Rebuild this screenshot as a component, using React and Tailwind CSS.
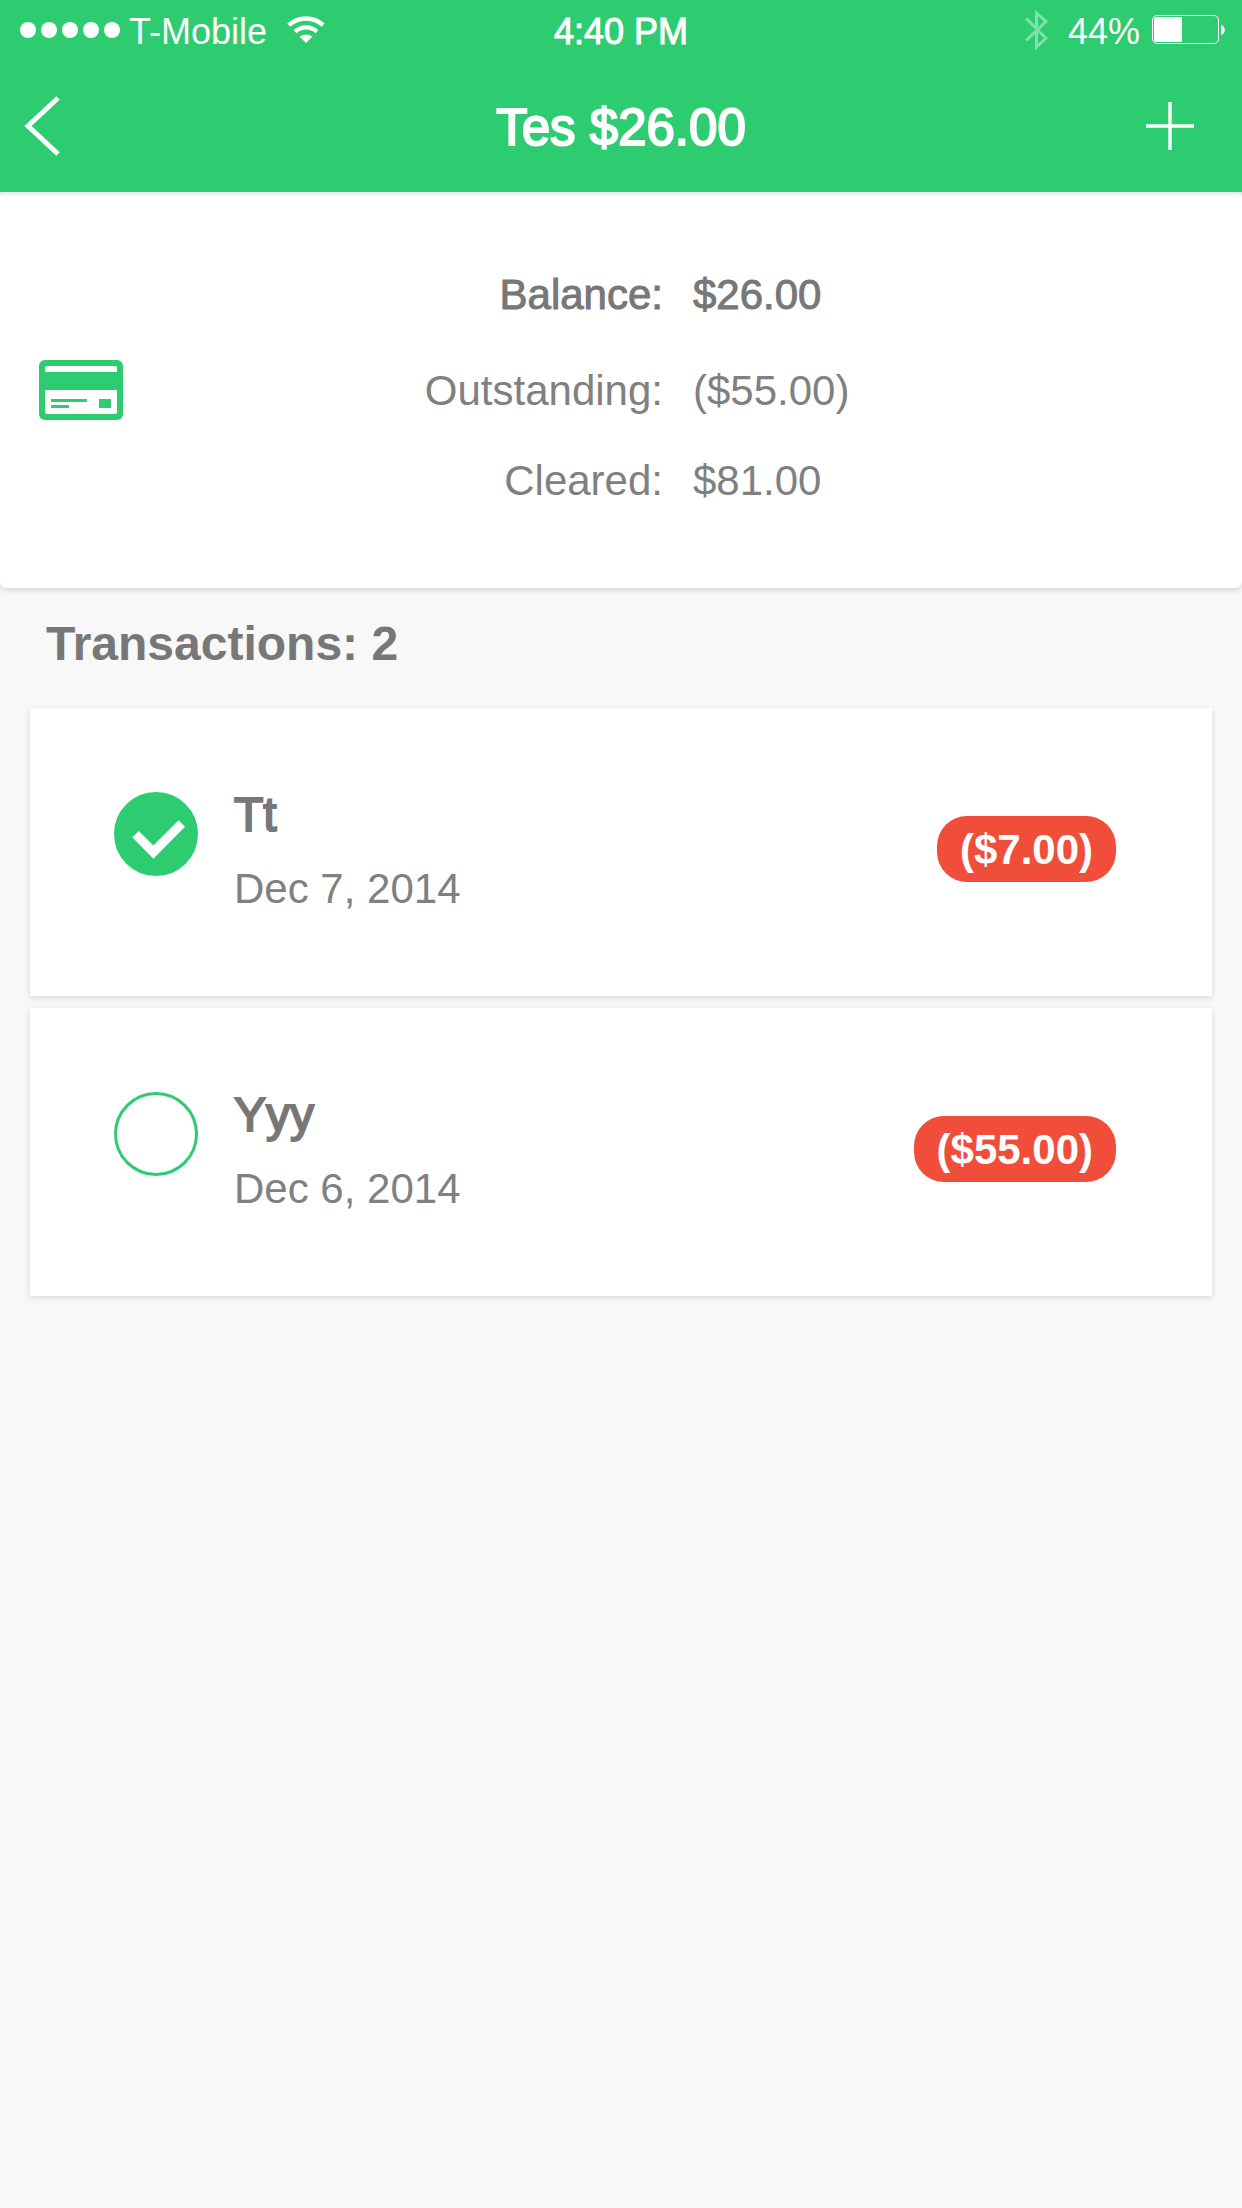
import React, { useState } from "react";

const transactions = [
  { id: "tt", name: "Tt", date: "Dec 7, 2014", amount: "($7.00)", cleared: true },
  { id: "yyy", name: "Yyy", date: "Dec 6, 2014", amount: "($55.00)", cleared: false },
];

function Wifi() {
  return (
    <svg className="ml-5 h-[28px] w-[38px]" viewBox="0 0 38 28" fill="none" aria-hidden="true">
      <path d="M1.8 9.2a25.5 25.5 0 0 1 34.4 0" stroke="#fff" strokeWidth="4.4" />
      <path d="M8 15.6a16.6 16.6 0 0 1 22 0" stroke="#fff" strokeWidth="4.2" />
      <path d="M19 27l-6.3-6.3a10 10 0 0 1 12.6 0z" fill="#fff" />
    </svg>
  );
}

function Bluetooth() {
  return (
    <svg className="h-[42px] w-[24px] opacity-40" viewBox="0 0 24 42" fill="none" aria-hidden="true">
      <path d="M1.2 9.5L21 29.3 11.5 38V4L21 12.5 1.2 31.5" stroke="#fff" strokeWidth="3" />
    </svg>
  );
}

function Battery() {
  return (
    <svg className="ml-3 h-[30px] w-[74px]" viewBox="0 0 74 30" aria-hidden="true">
      <rect x="0.5" y="0.5" width="66" height="28" rx="4.5" fill="none" stroke="#fff" />
      <path d="M4 2h26v25H4a2 2 0 0 1-2-2V4a2 2 0 0 1 2-2z" fill="#fff" />
      <path d="M69 10c5 0.8 5 9.2 0 10z" fill="#fff" />
    </svg>
  );
}

function StatusBar() {
  return (
    <div className="grid h-[60px] grid-cols-[1fr_auto_1fr] items-center px-4 text-[36px] leading-[60px]">
      <div className="flex items-center pl-1">
        <svg className="mr-[9px] h-4 w-[100px]" viewBox="0 0 100 16" fill="#fff" aria-hidden="true">
          <circle cx="8" cy="8" r="8" />
          <circle cx="29" cy="8" r="8" />
          <circle cx="50" cy="8" r="8" />
          <circle cx="71" cy="8" r="8" />
          <circle cx="92" cy="8" r="8" />
        </svg>
        <span className="h-[60px] pt-[2px]">T-Mobile</span>
        <Wifi />
      </div>
      <time className="h-[60px] pt-[2px] [-webkit-text-stroke:1px_currentColor]">4:40 PM</time>
      <div className="flex items-center justify-end">
        <Bluetooth />
        <span className="ml-[19px] h-[60px] pt-[2px]">44%</span>
        <Battery />
      </div>
    </div>
  );
}

function Summary() {
  return (
    <section className="flex items-center rounded-[6px] bg-white pl-[39px] pr-[9px] shadow-[0_2px_6px_rgba(0,0,0,0.15)]">
      <svg className="h-[60px] w-[84px] shrink-0" viewBox="0 0 84 60" aria-hidden="true">
        <rect width="84" height="60" rx="6" fill="#2ecc71" />
        <path d="M6 12V8a2 2 0 0 1 2-2h68a2 2 0 0 1 2 2v4z" fill="#fff" />
        <path d="M6 30h72v22a2 2 0 0 1-2 2H8a2 2 0 0 1-2-2z" fill="#fff" />
        <path d="M12 39h36v3H12zM12 45h18v3H12zM60 39h12v9H60z" fill="#2ecc71" />
      </svg>
      <dl className="grid flex-1 grid-cols-2 grid-rows-[102px_90px_90px] items-center gap-x-[30px] pb-[62px] pt-[52px] text-[42px] leading-[48px] text-[#808080]">
        <dt className="text-right text-[#777] [-webkit-text-stroke:1px_currentColor]">Balance:</dt>
        <dd className="text-[#777] [-webkit-text-stroke:1px_currentColor]">$26.00</dd>
        <dt className="text-right">Outstanding:</dt>
        <dd>($55.00)</dd>
        <dt className="text-right">Cleared:</dt>
        <dd>$81.00</dd>
      </dl>
    </section>
  );
}

function Transaction({ item }) {
  const [cleared, setCleared] = useState(item.cleared);
  return (
    <li className="flex items-start bg-white pb-[77px] pl-[84px] pr-[96px] pt-[77px] shadow-[0_2px_6px_rgba(0,0,0,0.13)]">
      <label className="relative mt-[7px] block size-[84px] shrink-0" htmlFor={item.id}>
        <input
          id={item.id}
          type="checkbox"
          aria-label={`${item.name} cleared`}
          checked={cleared}
          onChange={(e) => setCleared(e.target.checked)}
          className="block size-[84px] appearance-none rounded-full border-[3px] border-[#2ecc71] bg-white checked:bg-[#2ecc71]"
        />
        {cleared && (
          <svg className="pointer-events-none absolute inset-0" viewBox="0 0 84 84" aria-hidden="true">
            <path d="M18.3 45.3l6.4-6.3 14.6 14.5 25.4-25.2 6.3 6.4-31.7 32z" fill="#fff" />
          </svg>
        )}
      </label>
      <div className="ml-9 flex-1">
        <h3 className="mb-[14px] text-[48px] leading-[60px] text-[#777] [-webkit-text-stroke:2px_currentColor]">
          {item.name}
        </h3>
        <p className="text-[42px] leading-[60px] text-[#808080]">{item.date}</p>
      </div>
      <span className="mt-[31px] rounded-[30px] bg-[#f04e3a] px-[23px] pt-[2px] text-[42px] font-bold leading-[64px] text-white">
        {item.amount}
      </span>
    </li>
  );
}

export default function App() {
  return (
    <div className="min-h-screen bg-[#f8f8f8] font-['Liberation_Sans',Arial,sans-serif]">
      <header className="relative bg-[#2ecc71] text-white shadow-[0_2px_6px_rgba(0,0,0,0.12)]">
        <StatusBar />
        <nav className="grid h-[132px] grid-cols-[1fr_auto_1fr] items-center px-6">
          <button type="button" aria-label="Back" className="justify-self-start">
            <svg className="h-[60px] w-9" viewBox="0 0 36 60" fill="none">
              <path d="M34 2L4 30l30 28" stroke="#fff" strokeWidth="5" />
            </svg>
          </button>
          <h1 className="pt-[3px] text-[51px] leading-[60px] [-webkit-text-stroke:2px_currentColor]">Tes $26.00</h1>
          <button type="button" aria-label="Add transaction" className="justify-self-end pr-6">
            <svg className="size-12" viewBox="0 0 48 48" fill="none">
              <path d="M24 0v48M0 24h48" stroke="#fff" strokeWidth="3.4" />
            </svg>
          </button>
        </nav>
      </header>
      <main>
        <Summary />
        <section className="px-[30px] pt-[26px]">
          <h2 className="mb-[34px] pl-4 text-[48px] font-bold leading-[60px] text-[#777]">Transactions: 2</h2>
          <ul className="flex flex-col gap-3">
            {transactions.map((item) => (
              <Transaction key={item.id} item={item} />
            ))}
          </ul>
        </section>
      </main>
    </div>
  );
}
